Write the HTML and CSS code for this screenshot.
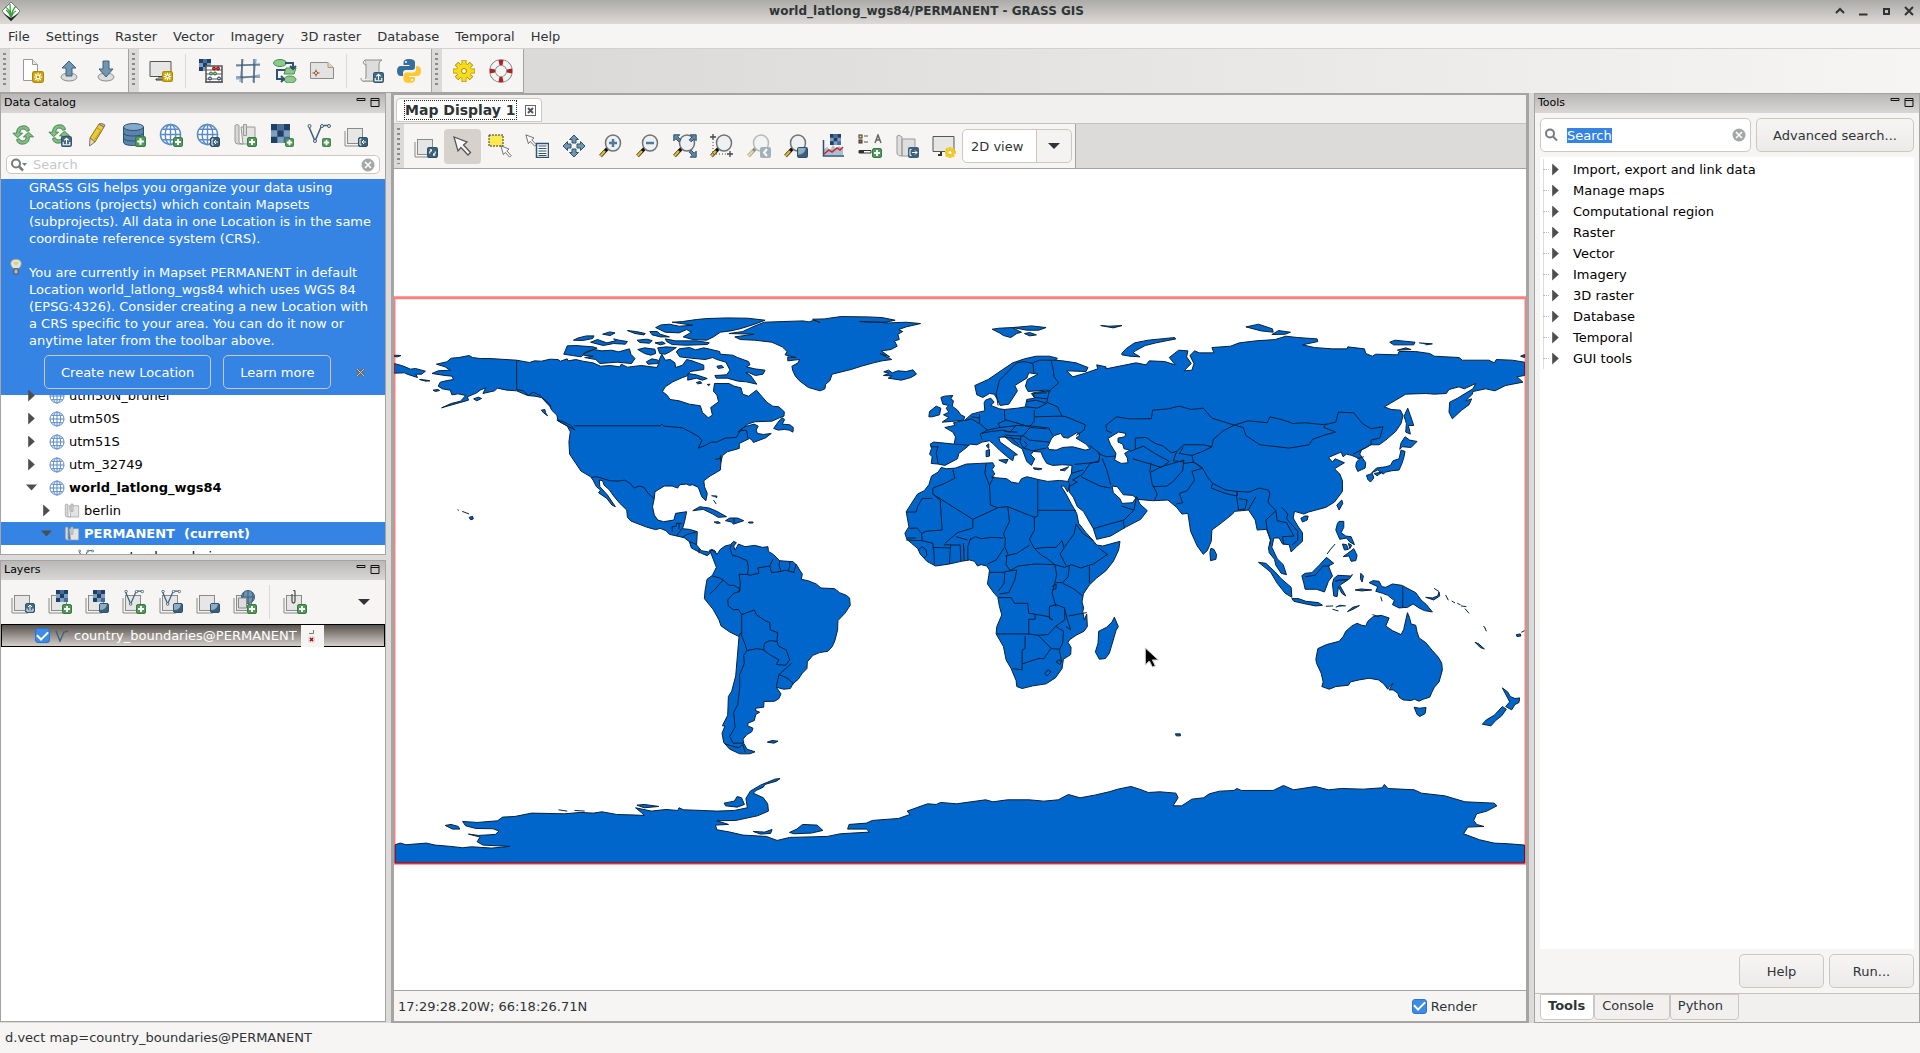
FILE: index.html
```html
<!DOCTYPE html>
<html lang="en">
<head>
    <meta charset="utf-8">
    <meta name="viewport" content="width=device-width, initial-scale=1">
    <title>world_latlong_wgs84/PERMANENT - GRASS GIS</title>
    <link rel="stylesheet" href="styles.css">
</head>
<body>
    <!-- icon set, 24x24 grid -->
    <svg class="sprite" aria-hidden="true">
        <symbol id="b-plus" viewBox="0 0 10 10"><rect x=".5" y=".5" width="9" height="9" rx="1.5" fill="#4e9a56" stroke="#3a7a45"/><path d="M5 2v6M2 5h6" stroke="#fff" stroke-width="2"/></symbol>
        <symbol id="b-up" viewBox="0 0 10 10"><rect x=".5" y=".5" width="9" height="9" rx="1.5" fill="#456a85" stroke="#33566f"/><path d="M5 7V2M3 4l2-2 2 2M2 5.500v2.500h6V5.500" fill="none" stroke="#fff"/></symbol>
        <symbol id="b-left" viewBox="0 0 10 10"><rect x=".5" y=".5" width="9" height="9" rx="1.500" fill="#3c5f7a" stroke="#2f5069"/><path d="M3.500 2H2v6h1.500M8 5H4M6 3L4 5l2 2" fill="none" stroke="#fff"/></symbol>
        <symbol id="b-moon" viewBox="0 0 10 10"><rect x=".5" y=".5" width="9" height="9" rx="1.500" fill="#3c5f7a" stroke="#2f5069"/><path d="M1 7Q7 7 8 1H1z" fill="#8fadc4"/></symbol>
        <symbol id="b-star" viewBox="0 0 10 10"><rect x=".5" y=".5" width="9" height="9" rx="1.500" fill="#d0a708" stroke="#b08b00"/><path d="M5 1.500v7M1.500 5h7M2.500 2.500l5 5M7.500 2.500l-5 5" stroke="#fff"/><circle cx="5" cy="5" r="1" fill="#c09a00"/></symbol>
        <symbol id="b-sync" viewBox="0 0 10 10"><rect x=".5" y=".5" width="9" height="9" rx="1.500" fill="#3c5f7a" stroke="#2f5069"/><path d="M2.500 6V4.500L4 3M7.500 4v1.500L6 7M2.500 2.500H4V4M7.500 7.500H6V6" fill="none" stroke="#fff"/></symbol>

        <symbol id="layers" viewBox="0 0 24 24"><path d="M1 6v15h16" fill="none" stroke="#888a88"/><rect x="3.500" y="3.500" width="15" height="15" fill="#e6e6e6" stroke="#8a8c8a"/></symbol>
        <symbol id="checker" viewBox="0 0 12 12"><path fill="#7f9fc1" d="M0 0h12v12H0z"/><path fill="#1f3f66" d="M0 0h4v4H0zM8 0h4v4H8zM4 4h4v4H4zM0 8h4v4H0z"/><path fill="#476c96" d="M4 0h4v4H4zM8 8h4v4H8z"/></symbol>
        <symbol id="vect" viewBox="0 0 24 24"><path d="M2 4l6 14L14 4l3-1.500h5" fill="none" stroke="#3c5f7a" stroke-width="1.500"/><g fill="#f6f5f4" stroke="#3c5f7a"><circle cx="2.500" cy="3" r="1.500"/><circle cx="8" cy="18" r="1.500"/><circle cx="15" cy="3" r="1.500"/><circle cx="22" cy="3" r="1.500"/></g></symbol>
        <symbol id="globe" viewBox="0 0 24 24"><g fill="#fff" stroke="#5b8bc9" stroke-width="1.500"><circle cx="12" cy="12" r="10.500"/><ellipse cx="12" cy="12" rx="5.500" ry="10.500"/><path d="M1.500 12h21M3.500 6.500h17M3.500 17.500h17M12 1.500v21"/></g></symbol>
        <symbol id="mapset" viewBox="0 0 24 24"><path d="M8 4h14v17H10z" fill="#e3e3e2" stroke="#989a98"/><path d="M2 2.500q2-2 4 0v17q2 2 4 1.500H5q-3 0-3-3zM10.500 1.500h3v11h-3z" fill="#d7d8d7" stroke="#989a98"/></symbol>
        <symbol id="refresh" viewBox="0 0 24 24"><g stroke="#3f7f49" fill="#7fbf84"><path d="M5 10q0-8 8-8 5 0 6 5l-3 1q-1-3-4-2.500-3 0-3.500 4.500h3l-5.500 5L1 10z"/><path d="M19 14q0 8-8 8-5 0-6-5l3-1q1 3 4 2.500 3 0 3.500-4.500h-3L18 9l5.500 5z"/></g></symbol>
        <symbol id="lens" viewBox="0 0 24 24"><path d="M9 14L1.500 22" stroke="#111" stroke-width="3.500"/><path d="M6 17l-4.500 5" stroke="#e8b92e" stroke-width="2.500"/><ellipse cx="14" cy="9" rx="7.500" ry="8" fill="#eef1f3" stroke="#6f7371" stroke-width="1.500"/></symbol>
        <symbol id="pointer" viewBox="0 0 24 24"><path d="M3 3l4 14 3-3.500 7 7.500 2.500-2.500-7-7.500L16 8z" fill="#fafafa" stroke="#555753" stroke-width="1.300"/></symbol>

        <symbol id="i-new" viewBox="0 0 24 24"><path d="M3.500.5h9l5 5v16h-14z" fill="#fff" stroke="#999"/><path d="M12.500.5v5h5" fill="#e5e5e5" stroke="#999"/><use href="#b-star" x="12" y="12" width="12" height="12"/></symbol>
        <symbol id="i-open" viewBox="0 0 24 24"><ellipse cx="12" cy="18" rx="8" ry="4" fill="#ddd" stroke="#8a8c8a"/><path d="M12 2l7 7h-4v8H9V9H5z" fill="#7295b0" stroke="#3f617b"/></symbol>
        <symbol id="i-save" viewBox="0 0 24 24"><ellipse cx="12" cy="18" rx="8" ry="4" fill="#ddd" stroke="#8a8c8a"/><path d="M9 2h6v8h4l-7 8-7-8h4z" fill="#7295b0" stroke="#3f617b"/></symbol>
        <symbol id="i-display" viewBox="0 0 24 24"><path d="M1 2.500h21v15H1z" fill="#e6e6e6" stroke="#555753"/><path d="M9 18h6v2H7v1h9" stroke="#333" fill="none"/><use href="#b-star" x="13" y="12" width="11" height="11"/></symbol>
        <symbol id="i-calc" viewBox="0 0 24 24"><use href="#checker" x="0" y="0" width="12" height="12"/><path d="M7 7h16v16H7z" fill="#fff" stroke="#555" stroke-width="1.500"/><path d="M7 11h16M7 15h16M7 20h16M6 23h18" stroke="#555"/><g fill="#e04040" stroke="#800"><circle cx="15" cy="9.500" r="1.500"/><circle cx="19" cy="9.500" r="1.500"/></g><g fill="#8c8" stroke="#363"><circle cx="12" cy="14.500" r="1.500"/><circle cx="16" cy="14.500" r="1.500"/></g><g fill="#acf" stroke="#235"><circle cx="11" cy="19.500" r="1.500"/><circle cx="20" cy="19.500" r="1.500"/></g></symbol>
        <symbol id="i-grid" viewBox="0 0 24 24"><path d="M7 0L4 23M20 0l-3 23M0 7l24-2M0 20l24-4" stroke="#7db3dc" stroke-width="1.500" fill="none"/><path d="M6 0v24M18 0v24M0 6h24M0 18h24" stroke="#46505a" stroke-width="1.200"/></symbol>
        <symbol id="i-model" viewBox="0 0 24 24"><g fill="#8dc98d" stroke="#4b8c50"><ellipse cx="7" cy="4" rx="6.500" ry="3.500"/><path d="M13 9h10l-2 6H11z"/><ellipse cx="17" cy="20.500" rx="6" ry="3.500"/></g><path d="M12 4h8v6M17 7l3 3 3-3M12 11H4v9h7M8 17l3 3-3 3" fill="none" stroke="#2f526d" stroke-width="2"/></symbol>
        <symbol id="i-carto" viewBox="0 0 24 24"><path d="M.5 3.500h17l6 5v11H.5z" fill="#e3e3e3" stroke="#8a8c8a"/><path d="M18 3.500v5h5.500" fill="#f0d4a0" stroke="#a98"/><path d="M6 10.500v7M2.500 14h7" stroke="#9c4a1a"/><circle cx="6" cy="14" r="1.500" fill="#fff" stroke="#9c4a1a"/></symbol>
        <symbol id="i-script" viewBox="0 0 24 24"><path d="M5 1h17q-3 1-3 4v17H3q3-1 3-4V6z" fill="#ddd" stroke="#8a8c8a"/><path d="M5 1q-4 3 1 5M1 19q0 4 4 3h13" fill="#eee" stroke="#8a8c8a"/><use href="#b-up" x="13" y="13" width="11" height="11"/></symbol>
        <symbol id="i-python" viewBox="0 0 24 24"><path d="M12 0Q6.500 0 6.500 3.500V6h6v1H4Q0 7 0 12t4 5h2v-3q0-3 3-3h6q3 0 3-3V3.500Q18 0 12 0z" fill="#366f9e"/><path d="M12 24q6 0 6-3.500V18h-6v-1h8q4 0 4-5t-4-5h-1v3q0 3.500-3 3.500H9.500q-3 0-3 3v4Q6.500 24 12 24z" fill="#ffc836"/><circle cx="9" cy="3" r="1" fill="#fff"/><circle cx="15" cy="21" r="1" fill="#fff"/></symbol>
        <symbol id="i-gear" viewBox="0 0 24 24"><g stroke="#b08b00" stroke-width="5"><path d="M12 1v22M1 12h22M4.500 4.500l15 15M19.500 4.500l-15 15"/></g><g stroke="#f7dc18" stroke-width="3.500"><path d="M12 1.500v21M1.500 12h21M5 5l14 14M19 5L5 19"/></g><circle cx="12" cy="12" r="7" fill="#f7dc18"/><circle cx="12" cy="12" r="2.500" fill="#f6f5f4" stroke="#b08b00"/></symbol>
        <symbol id="i-help" viewBox="0 0 24 24"><circle cx="12" cy="12" r="8.500" fill="none" stroke="#777" stroke-width="6.500"/><circle cx="12" cy="12" r="8.500" fill="none" stroke="#f3f3f3" stroke-width="5"/><g fill="#b52020"><path d="M9.500 1h5l-1 5h-3zM9.500 23h5l-1-5h-3zM1 9.500v5l5-1v-3zM23 9.500v5l-5-1v-3z"/></g></symbol>

        <symbol id="i-reload" viewBox="0 0 24 24"><use href="#refresh" width="22" height="22" x="1" y="1"/></symbol>
        <symbol id="i-reload2" viewBox="0 0 24 24"><use href="#refresh" width="22" height="22"/><use href="#b-up" x="13" y="13" width="11" height="11"/></symbol>
        <symbol id="i-edit" viewBox="0 0 24 24"><path d="M5 15L14 1l5 3L10 19z" fill="#ecc93a" stroke="#8b7410"/><path d="M5 15l5 4-5.500 4z" fill="#f1d9b5" stroke="#777"/><path d="M14 1l2-1 4 2-1 2z" fill="#caa" stroke="#777"/><path d="M12 5l4 2.500-7 10" fill="none" stroke="#b89a20"/></symbol>
        <symbol id="i-db" viewBox="0 0 24 24"><path d="M1.500 4v15q0 3.500 10 3.500t10-3.500V4" fill="#5b84ac" stroke="#2d5075"/><ellipse cx="11.500" cy="4" rx="10" ry="3.500" fill="#85a9cb" stroke="#2d5075"/><path d="M1.500 9.500q0 3.500 10 3.500t10-3.500M1.500 14.500q0 3.500 10 3.500t10-3.500" fill="none" stroke="#2d5075"/><use href="#b-plus" x="13" y="13" width="11" height="11"/></symbol>
        <symbol id="i-loc" viewBox="0 0 24 24"><use href="#globe" width="23" height="23"/><use href="#b-plus" x="14" y="14" width="10" height="10"/></symbol>
        <symbol id="i-locdl" viewBox="0 0 24 24"><use href="#globe" width="23" height="23"/><use href="#b-left" x="14" y="14" width="10" height="10"/></symbol>
        <symbol id="i-mapset" viewBox="0 0 24 24"><use href="#mapset" width="24" height="24"/><use href="#b-plus" x="14" y="14" width="10" height="10"/></symbol>
        <symbol id="i-rast" viewBox="0 0 24 24"><use href="#checker" width="19" height="19" x="1" y="1"/><use href="#b-plus" x="15" y="15" width="9" height="9"/></symbol>
        <symbol id="i-vect" viewBox="0 0 24 24"><use href="#vect" width="24" height="24"/><use href="#b-plus" x="15" y="15" width="9" height="9"/></symbol>
        <symbol id="i-link" viewBox="0 0 24 24"><use href="#layers" width="24" height="24" y="2"/><use href="#b-left" x="14" y="14" width="10" height="10"/></symbol>

        <symbol id="i-lopen" viewBox="0 0 24 24"><use href="#layers" width="24" height="24" y="2"/><use href="#b-up" x="14" y="13" width="10" height="10"/></symbol>
        <symbol id="i-lrast" viewBox="0 0 24 24"><use href="#layers" width="24" height="24" y="2"/><use href="#checker" x="8" y="0" width="12" height="12"/><use href="#b-plus" x="14" y="14" width="10" height="10"/></symbol>
        <symbol id="i-lrast2" viewBox="0 0 24 24"><use href="#layers" width="24" height="24" y="2"/><use href="#checker" x="8" y="0" width="12" height="12"/><use href="#b-moon" x="14" y="13" width="10" height="10"/></symbol>
        <symbol id="i-lvect" viewBox="0 0 24 24"><use href="#layers" width="24" height="24" y="2"/><use href="#vect" x="2" y="-1" width="20" height="20"/><use href="#b-plus" x="14" y="14" width="10" height="10"/></symbol>
        <symbol id="i-lvect2" viewBox="0 0 24 24"><use href="#layers" width="24" height="24" y="2"/><use href="#vect" x="2" y="-1" width="20" height="20"/><use href="#b-moon" x="14" y="13" width="10" height="10"/></symbol>
        <symbol id="i-lmoon" viewBox="0 0 24 24"><use href="#layers" width="24" height="24" y="2"/><use href="#b-moon" x="14" y="13" width="10" height="10"/></symbol>
        <symbol id="i-lweb" viewBox="0 0 24 24"><use href="#layers" width="24" height="24" y="2"/><circle cx="15" cy="7" r="6.500" fill="#6f93b3" stroke="#3c5f7a"/><path d="M8.500 7h13M15 .5v13M11 2q-2 5 0 10M19 2q2 5 0 10" stroke="#3c5f7a" fill="none"/><path d="M5.500 8h8v10h-8z" fill="#ddd" stroke="#888"/><use href="#b-plus" x="14" y="14" width="10" height="10"/></symbol>
        <symbol id="i-lgroup" viewBox="0 0 24 24"><use href="#layers" width="24" height="24" y="2"/><path d="M9 4v7q0 2 1.500 2t1.500-2V2q0-2-2-2" fill="none" stroke="#555" stroke-width="1.300"/><use href="#b-plus" x="14" y="14" width="10" height="10"/></symbol>

        <symbol id="i-render" viewBox="0 0 24 24"><use href="#layers" width="24" height="24" y="2"/><use href="#b-sync" x="13" y="13" width="11" height="11"/></symbol>
        <symbol id="i-select" viewBox="0 0 24 24"><path d="M1 1h14v11H1z" fill="#fce94f" stroke="#333" stroke-dasharray="2 1"/><use href="#pointer" x="11" y="10" width="15" height="15"/></symbol>
        <symbol id="i-query" viewBox="0 0 24 24"><use href="#pointer" x="-1" y="-1" width="15" height="15"/><path d="M11.500 9.500h12v14h-12z" fill="#fff" stroke="#2f526d" stroke-width="1.500"/><path d="M13.500 12h8M13.500 14.500h8M13.500 17h8M13.500 19.500h8M13.500 21.500h8" stroke="#2f526d"/></symbol>
        <symbol id="i-pan" viewBox="0 0 24 24"><g fill="#7295b0" stroke="#2f526d"><path d="M12 1l4.500 4.500H14V9h-4V5.500H7.500zM12 23l4.500-4.500H14V15h-4v3.500H7.500zM1 12l4.500-4.500V10H9v4H5.500v2.500zM23 12l-4.500-4.500V10H15v4h3.500v2.500z"/></g></symbol>
        <symbol id="i-zin" viewBox="0 0 24 24"><use href="#lens" width="24" height="24"/><path d="M14 5v8M10 9h8" stroke="#4f7a9c" stroke-width="2.500"/></symbol>
        <symbol id="i-zout" viewBox="0 0 24 24"><use href="#lens" width="24" height="24"/><path d="M10 9h8" stroke="#4f7a9c" stroke-width="2.500"/></symbol>
        <symbol id="i-zext" viewBox="0 0 24 24"><use href="#lens" width="24" height="24"/><g fill="#5f87a5" stroke="#2f526d"><path d="M.8.8h6l-2 2 3 3-2 2-3-3-2 2zM23.200.8h-6l2 2-3 3 2 2 3-3 2 2zM23.200 23.200h-6l2-2-3-3 2-2 3 3 2-2z"/></g></symbol>
        <symbol id="i-zreg" viewBox="0 0 24 24"><use href="#lens" width="24" height="24"/><path d="M3 0v6M0 3h6M20 17v6M17 20h6" stroke="#444" stroke-width="1.300"/><path d="M3 8v12h13" stroke="#444" fill="none" stroke-dasharray="1 2"/></symbol>
        <symbol id="i-zback" viewBox="0 0 24 24"><g opacity=".45"><use href="#lens" width="24" height="24"/><rect x="13" y="13" width="11" height="11" rx="2" fill="#3c5f7a"/><path d="M20 15l-3 3.500 3 3.500" stroke="#fff" stroke-width="2" fill="none"/></g></symbol>
        <symbol id="i-zmore" viewBox="0 0 24 24"><use href="#lens" width="24" height="24"/><use href="#b-moon" x="13" y="13" width="11" height="11"/></symbol>
        <symbol id="i-analyze" viewBox="0 0 24 24"><use href="#checker" x="9" y="0" width="11" height="11"/><path d="M3 21v-6l3-2 3 3 3-5 3 4 3-3 4 3v6z" fill="#a9c0d4"/><path d="M2.500 6v16H23" fill="none" stroke="#2f526d" stroke-width="1.500"/><path d="M3 20l5-4 3 2 5-4 3 2 3-3" fill="none" stroke="#c22" stroke-width="1.500"/></symbol>
        <symbol id="i-overlay" viewBox="0 0 24 24"><rect x="1" y="1" width="3" height="3" fill="#fe3" stroke="#333"/><rect x="1" y="6" width="3" height="3" fill="#d55" stroke="#333"/><path d="M6 2h4M6 8h4" stroke="#555"/><path d="M17 9l3-8 3 8M18 6h4" fill="none" stroke="#666" stroke-width="1.500"/><path d="M1 16.500h12v2.500H1z" fill="#fff" stroke="#333"/><path d="M1 16h5v3H1z" fill="#333"/><use href="#b-plus" x="14" y="14" width="10" height="10"/></symbol>
        <symbol id="i-export" viewBox="0 0 24 24"><path d="M7 5h13v17H7zM2 2q2-2 5 1v19q-5 0-5-3z" fill="#dedede" stroke="#999b99"/><rect x="13" y="13" width="11" height="11" rx="2" fill="#3c5f7a"/><path d="M16.500 15.500H15v6h1.500M17 18.500h5M20 16.500l2 2-2 2" stroke="#fff" fill="none"/></symbol>
        <symbol id="i-settings" viewBox="0 0 24 24"><path d="M1 2.500h21v15H1z" fill="#e6e6e6" stroke="#555753"/><path d="M9 18v3H6" stroke="#333" fill="none" stroke-width="2"/><path d="M18 13v11M13 18.500h11M14 14.500l8 8M22 14.500l-8 8" stroke="#f0c929" stroke-width="3"/><circle cx="18" cy="18.500" r="1.500" fill="#fff"/></symbol>
        <symbol id="i-clear" viewBox="0 0 14 14"><circle cx="7" cy="7" r="6.500" fill="#a3a7a8"/><path d="M4 4l6 6M10 4l-6 6" stroke="#fff" stroke-width="1.500"/></symbol>
        <symbol id="i-min" viewBox="0 0 10 10"><path d="M1 1.500h8v2H1z" fill="none" stroke="#111"/></symbol>
        <symbol id="i-max" viewBox="0 0 10 10"><path d="M1 1.500h8v8H1zM1 3.500h8" fill="none" stroke="#111"/></symbol>
    </svg>

    <div class="window">
        <header class="titlebar">
            <svg class="logo" viewBox="0 0 20 22"><path d="M10 1l9 9-9 10L1 10z" fill="#fff" stroke="#777"/><path d="M2 12l8 8 8-8-8 5z" fill="#222"/><path d="M10 17Q9 8 4 6M10 17Q9 9 9 3M10 17q1-8 5-12M10 17Q8 11 5 9M10 17q2-6 5-7" fill="none" stroke="#35a03a" stroke-width="1.300"/></svg>
            <h1>world_latlong_wgs84/PERMANENT - GRASS GIS</h1>
            <div class="win-buttons">
                <button aria-label="Shade"><svg viewBox="0 0 10 10"><path d="M1 7l4-4 4 4" fill="none" stroke="#2e3436" stroke-width="2"/></svg></button>
                <button aria-label="Minimize"><svg viewBox="0 0 10 10"><path d="M1 8.500h8.500" stroke="#2e3436" stroke-width="2"/></svg></button>
                <button aria-label="Maximize"><svg viewBox="0 0 10 10"><path d="M3 3h5v5H3z" fill="none" stroke="#2e3436" stroke-width="2"/></svg></button>
                <button aria-label="Close"><svg viewBox="0 0 10 10"><path d="M1 1l8 8M9 1L1 9" stroke="#2e3436" stroke-width="2"/></svg></button>
            </div>
        </header>

        <nav class="menubar">
            <a href="#">File</a>
            <a href="#">Settings</a>
            <a href="#">Raster</a>
            <a href="#">Vector</a>
            <a href="#">Imagery</a>
            <a href="#">3D raster</a>
            <a href="#">Database</a>
            <a href="#">Temporal</a>
            <a href="#">Help</a>
        </nav>

        <div class="toolbars">
            <div class="toolbar">
                <span class="grip"></span>
                <button class="tool" aria-label="New workspace"><svg><use href="#i-new"/></svg></button>
                <button class="tool" aria-label="Open workspace"><svg><use href="#i-open"/></svg></button>
                <button class="tool" aria-label="Save workspace"><svg><use href="#i-save"/></svg></button>
            </div>
            <div class="toolbar">
                <span class="grip"></span>
                <button class="tool" aria-label="New map display"><svg><use href="#i-display"/></svg></button>
                <span class="sep"></span>
                <button class="tool" aria-label="Raster map calculator"><svg><use href="#i-calc"/></svg></button>
                <button class="tool" aria-label="Georectifier"><svg><use href="#i-grid"/></svg></button>
                <button class="tool" aria-label="Graphical modeler"><svg><use href="#i-model"/></svg></button>
                <button class="tool" aria-label="Cartographic composer"><svg><use href="#i-carto"/></svg></button>
                <span class="sep"></span>
                <button class="tool" aria-label="Launch script"><svg><use href="#i-script"/></svg></button>
                <button class="tool" aria-label="Python editor"><svg><use href="#i-python"/></svg></button>
            </div>
            <div class="toolbar">
                <span class="grip"></span>
                <button class="tool" aria-label="GUI settings"><svg><use href="#i-gear"/></svg></button>
                <button class="tool" aria-label="Help"><svg><use href="#i-help"/></svg></button>
            </div>
        </div>

        <main class="panes">
            <div class="side left">
                <section class="pane catalog">
                    <h2 class="caption">Data Catalog <span><svg><use href="#i-min"/></svg><svg><use href="#i-max"/></svg></span></h2>
                    <div class="tools">
                        <button class="tool" aria-label="Reload tree"><svg><use href="#i-reload"/></svg></button>
                        <button class="tool" aria-label="Reload current mapset"><svg><use href="#i-reload2"/></svg></button>
                        <button class="tool" aria-label="Allow edits"><svg><use href="#i-edit"/></svg></button>
                        <button class="tool" aria-label="Add database"><svg><use href="#i-db"/></svg></button>
                        <button class="tool" aria-label="Create location"><svg><use href="#i-loc"/></svg></button>
                        <button class="tool" aria-label="Download location"><svg><use href="#i-locdl"/></svg></button>
                        <button class="tool" aria-label="Create mapset"><svg><use href="#i-mapset"/></svg></button>
                        <button class="tool" aria-label="Import raster"><svg><use href="#i-rast"/></svg></button>
                        <button class="tool" aria-label="Import vector"><svg><use href="#i-vect"/></svg></button>
                        <button class="tool" aria-label="More imports"><svg><use href="#i-link"/></svg></button>
                    </div>
                    <div class="field small">
                        <svg class="loupe" viewBox="0 0 18 14"><circle cx="6" cy="5.500" r="4" fill="none" stroke="#777b7c" stroke-width="2"/><path d="M9 8.500l4 4" stroke="#777b7c" stroke-width="2.500"/><path d="M12 5h5l-2.500 3z" fill="#777b7c"/></svg>
                        <input type="text" placeholder="Search" aria-label="Search catalog">
                        <button aria-label="Clear"><svg><use href="#i-clear"/></svg></button>
                    </div>
                    <div class="infobar">
                        <svg class="bulb" viewBox="0 0 14 18"><path d="M7 1q5 0 5.500 4.500 0 3-2.500 5H4q-2.500-2-2.500-5Q2 1 7 1z" fill="#d8e4e8" stroke="#888"/><path d="M4 4h6L8 7H6z" fill="#e8d44a"/><path d="M5 11h4v5H5z" fill="#bbb" stroke="#555"/></svg>
                        <div class="message">
                            <p>GRASS GIS helps you organize your data using Locations (projects) which contain Mapsets (subprojects). All data in one Location is in the same coordinate reference system (CRS).</p>
                            <p>You are currently in Mapset PERMANENT in default Location world_latlong_wgs84 which uses WGS 84 (EPSG:4326). Consider creating a new Location with a CRS specific to your area. You can do it now or anytime later from the toolbar above.</p>
                            <div class="info-buttons">
                                <button>Create new Location</button>
                                <button>Learn more</button>
                                <button class="dismiss" aria-label="Close"><svg viewBox="0 0 10 10"><path d="M1 1l8 8M9 1L1 9" stroke="#666" stroke-width="3"/><path d="M1 1l8 8M9 1L1 9" stroke="#d8d4ce"/></svg></button>
                            </div>
                        </div>
                    </div>
                    <ul class="tree">
                        <li><i class="tri"></i><svg><use href="#globe"/></svg>utm50N_brunei</li>
                        <li><i class="tri"></i><svg><use href="#globe"/></svg>utm50S</li>
                        <li><i class="tri"></i><svg><use href="#globe"/></svg>utm51S</li>
                        <li><i class="tri"></i><svg><use href="#globe"/></svg>utm_32749</li>
                        <li class="bold"><i class="tri open"></i><svg><use href="#globe"/></svg>world_latlong_wgs84</li>
                        <li class="l2"><i class="tri"></i><svg><use href="#mapset"/></svg>berlin</li>
                        <li class="l2 bold current"><i class="tri open"></i><svg><use href="#mapset"/></svg>PERMANENT&nbsp; (current)</li>
                        <li class="l3"><svg><use href="#vect"/></svg>country_boundaries</li>
                    </ul>
                </section>

                <section class="pane">
                    <h2 class="caption">Layers <span><svg><use href="#i-min"/></svg><svg><use href="#i-max"/></svg></span></h2>
                    <div class="tools">
                        <button class="tool" aria-label="Add multiple layers"><svg><use href="#i-lopen"/></svg></button>
                        <button class="tool" aria-label="Add raster"><svg><use href="#i-lrast"/></svg></button>
                        <button class="tool" aria-label="Add various raster layers"><svg><use href="#i-lrast2"/></svg></button>
                        <button class="tool" aria-label="Add vector"><svg><use href="#i-lvect"/></svg></button>
                        <button class="tool" aria-label="Add various vector layers"><svg><use href="#i-lvect2"/></svg></button>
                        <button class="tool" aria-label="Add overlays"><svg><use href="#i-lmoon"/></svg></button>
                        <button class="tool" aria-label="Add web service layer"><svg><use href="#i-lweb"/></svg></button>
                        <span class="sep"></span>
                        <button class="tool" aria-label="Add group"><svg><use href="#i-lgroup"/></svg></button>
                        <button class="tool more" aria-label="More"><i class="down"></i></button>
                    </div>
                    <div class="layer-list">
                        <div class="layer">
                            <input type="checkbox" id="layer1" class="check" checked>
                            <label for="layer1"><svg viewBox="0 0 16 14"><path d="M2 2l4 10L10 3l4-1" fill="none" stroke="#3c5f7a" stroke-width="1.300"/></svg>country_boundaries@PERMANENT</label>
                            <button aria-label="Layer options"><svg viewBox="0 0 10 14"><path d="M6.500 1v3.500H2" fill="none" stroke="#777"/><rect x="2" y="8" width="5" height="5" fill="#fff" stroke="#ccc"/><path d="M3 9l3 3M6 9l-3 3" stroke="#b00" stroke-width="1.500"/></svg></button>
                        </div>
                    </div>
                </section>
            </div>

            <section class="display">
                <div class="tabs">
                    <div class="tab"><a href="#">Map Display 1</a><button aria-label="Close tab"><svg viewBox="0 0 11 11"><rect x=".5" y=".5" width="10" height="10" fill="#fff" stroke="#666"/><path d="M3 3l5 5M8 3l-5 5" stroke="#555" stroke-width="2"/></svg></button></div>
                </div>
                <div class="map-tools">
                    <div class="toolbar">
                        <span class="grip"></span>
                        <button class="tool" aria-label="Render map"><svg><use href="#i-render"/></svg></button>
                        <button class="tool active" aria-label="Pointer"><svg><use href="#pointer"/></svg></button>
                        <button class="tool" aria-label="Select features"><svg><use href="#i-select"/></svg></button>
                        <button class="tool" aria-label="Query"><svg><use href="#i-query"/></svg></button>
                        <button class="tool" aria-label="Pan"><svg><use href="#i-pan"/></svg></button>
                        <button class="tool" aria-label="Zoom in"><svg><use href="#i-zin"/></svg></button>
                        <button class="tool" aria-label="Zoom out"><svg><use href="#i-zout"/></svg></button>
                        <button class="tool" aria-label="Zoom to layer"><svg><use href="#i-zext"/></svg></button>
                        <button class="tool" aria-label="Zoom to region"><svg><use href="#i-zreg"/></svg></button>
                        <button class="tool" aria-label="Zoom back" disabled><svg><use href="#i-zback"/></svg></button>
                        <button class="tool" aria-label="Zoom options"><svg><use href="#i-zmore"/></svg></button>
                        <button class="tool" aria-label="Analyze map"><svg><use href="#i-analyze"/></svg></button>
                        <button class="tool" aria-label="Add map elements"><svg><use href="#i-overlay"/></svg></button>
                        <button class="tool" aria-label="Save display"><svg><use href="#i-export"/></svg></button>
                        <button class="tool" aria-label="Display settings"><svg><use href="#i-settings"/></svg></button>
                        <div class="combo">
                            <select aria-label="View mode"><option>2D view</option><option>3D view</option></select>
                            <i class="down"></i>
                        </div>
                    </div>
                </div>
                <div class="canvas">
                    <svg class="world" viewBox="394 169 1133 821">
                        <!-- North America -->
                        <g class="land" transform="translate(390 290) scale(.3444 .3333)">
                            <path d="M150 353L178 340 205 333 220 316 198 311 180 314 175 300 152 296 140 288 146 276 162 272 185 268 180 258 160 256 122 250 140 242 175 240 160 230 135 222 165 215 178 204 200 202 230 196 240 202 262 205 290 205 368 210 405 217 420 212 440 213 465 207 488 208 495 213 515 206 518 212 540 208 560 213 590 218 612 228 640 226 668 230 672 222 690 231 730 226 776 232 780 222 784 205 790 192 800 210 815 208 828 218 830 232 850 225 862 208 878 212 912 225 912 238 872 244 862 258 850 262 822 275 800 290 792 304 806 316 814 328 840 332 870 342 902 347 908 367 925 383 937 375 932 352 955 335 950 315 940 303 943 280 985 280 1000 288 1020 293 1025 312 1042 318 1065 300 1080 318 1095 336 1112 348 1130 350 1146 365 1145 378 1132 383 1110 393 1060 395 1040 402 1012 425 1030 410 1058 402 1070 408 1064 420 1068 430 1085 433 1108 430 1092 443 1056 457 1052 450 1045 445 1015 460 1015 475 980 485 966 497 962 515 960 540 930 558 912 572 914 590 922 610 918 632 906 620 896 592 880 584 870 586 862 582 842 584 836 594 820 588 797 588 770 605 768 625 763 650 768 675 778 690 795 695 825 690 830 670 862 665 856 695 850 716 870 718 893 725 891 765 905 782 925 786 935 778 945 783 950 797 942 795 932 788 922 797 905 790 876 774 870 755 855 743 812 733 802 722 785 715 772 719 745 711 700 693 690 682 688 660 668 640 650 618 638 600 622 585 618 572 608 570 610 590 632 615 655 650 645 645 630 625 606 608 612 600 600 590 590 570 583 560 555 543 540 520 522 492 520 455 524 425 515 408 488 392 485 375 470 360 464 348 440 322 420 318 400 316 368 302 340 300 312 294 304 302 270 310 278 293 262 300 252 308 225 320 228 330z"/>
                            <path d="M485 390L502 394 526 406 538 420 520 410zM440 360L450 358 452 368 458 377 446 368zM243 326L257 321 266 325 252 332zM125 300L139 298 144 301 132 304zM86 268L98 269 116 272 104 273zM12 220L34 226 60 237 74 235 103 243 92 252 75 252 80 262 50 252 42 248 12 249zM12 195L32 196 22 200 12 199z"/>
                            <path d="M1115 415L1127 397 1139 383 1147 388 1140 402 1162 404 1172 412 1171 426 1160 420 1146 418 1128 420z"/>
                            <path d="M832 185L840 176 870 172 888 179 912 173 930 177 958 184 960 192 996 195 1010 202 1042 214 1046 224 1036 230 1060 236 1090 240 1084 252 1062 256 1044 248 1034 248 1048 256 1066 282 1036 275 1012 273 980 264 948 264 944 256 978 254 988 240 976 216 950 208 938 202 916 208 876 204 842 200zM865 270L866 250 890 254 922 265 908 270 890 264zM890 277L902 274 906 279 894 281zM922 283L930 282 926 287zM950 228L964 226 970 232 954 235z"/>
                            <path d="M515 167L540 166 590 170 602 174 568 186 556 200 530 196 505 192 510 180zM562 191L592 178 616 182 644 180 664 185 696 176 700 192 712 205 702 220 660 216 610 220 598 208 566 202 590 198 562 195zM720 178L740 173 770 177 772 190 758 195 740 190zM778 173L802 170 832 172 815 184 800 192 784 190zM745 215L761 206 780 210 778 220 750 222z"/>
                            <path d="M772 112L788 104 812 102 840 108 880 105 820 96 850 94 890 88 920 85 980 83 1040 84 1090 90 1070 98 1042 108 1016 116 990 122 960 126 940 140 920 150 880 148 852 140 876 126 862 118 840 128 800 126zM533 150L547 143 571 137 593 137 589 145 560 151zM583 156L603 148 630 158 655 152 650 146 666 150 690 154 684 162 650 160 620 166zM618 132L638 125 654 128 640 136zM690 121L716 124 742 130 738 134 712 130zM718 150L746 147 762 151 754 159 726 157zM755 124L777 124 785 132 812 140 786 140 762 134zM770 158L792 155 800 160 786 164zM800 146L830 152 892 152 928 158 922 163 860 165 820 163 804 154z"/>
                            <path d="M985 130L1025 124 1058 108 1088 96 1140 94 1200 92 1218 95 1232 90 1250 97 1228 87 1262 86 1310 79 1390 80 1430 82 1468 90 1440 96 1365 94 1450 98 1500 96 1542 100 1500 110 1478 118 1490 124 1476 132 1480 148 1466 152 1474 168 1456 178 1428 182 1452 200 1424 190 1458 208 1430 212 1405 218 1370 228 1340 238 1285 252 1278 272 1266 282 1264 296 1250 302 1216 292 1190 272 1178 258 1170 240 1168 228 1186 218 1190 208 1156 212 1156 200 1180 202 1148 194 1154 184 1140 170 1110 156 1060 150 1018 148 1002 140 1058 132z"/>
                            <path d="M1435 245L1449 240 1460 248 1476 242 1500 244 1520 239 1530 252 1514 262 1486 270 1448 264 1458 257 1434 256 1450 250z"/>
                            <path d="M880 662L900 650 928 654 950 664 978 680 954 682 938 672 910 658zM975 692L987 684 1010 684 1028 692 1014 697 998 702 992 696zM942 696L954 695 960 699 950 700zM1042 696L1055 696 1055 699 1043 699zM934 617L950 618 949 624M940 630L948 642M196 659L200 661M210 664L230 672M230 682L240 679 242 687 234 689z"/>
                            <path class="line" d="M368 210V298L388 302 402 316 416 306 436 316 464 342 468 350M535 407H785L790 402 796 408 850 413 870 424 898 440 906 452 896 474 916 466 934 456 950 456 974 444 1006 442 1018 422 1036 420 1040 443M585 562L600 560 640 572 666 573 682 570 698 580 710 594 724 588 738 592 752 612 768 626M820 726L820 710 832 708V700L848 700M840 700V718M848 716L832 738M850 742L862 734 890 726M870 755L890 763M898 776V790M945 508L963 504 961 518M960 495V511M1000 684V700"/>
                        </g>
                        <!-- South America -->
                        <g class="land" transform="translate(660 520) scale(.3333)">
                            <path d="M150 90L160 92 172 103 182 88 196 78 212 74 222 64 230 68 222 78 226 90 232 80 236 72 256 80 285 76 308 82 325 80 326 94 342 104 360 122 385 124 400 125 412 136 420 150 428 162 425 178 445 182 470 192 484 204 525 206 540 218 560 226 570 234 572 256 556 280 535 302 534 330 526 362 518 380 505 394 480 398 460 406 443 426 442 446 428 460 416 478 400 492 392 506 372 508 350 502 364 522 358 536 345 544 313 545 312 562 288 565 288 572 300 577 288 584 284 602 265 610 264 618 280 625 276 636 262 644 250 658 252 670 262 688 286 696 270 702 240 702 210 688 192 668 187 640 196 618 188 618 204 586 206 530 216 514 228 468 238 350 210 336 184 318 178 300 160 268 134 236 136 212 142 178 158 166 170 142z"/>
                            <path d="M323 667L337 662 355 664 343 670z"/>
                            <path class="line" d="M215 74L211 86 218 106 236 110 262 122 266 142 264 164 272 166 278 164 298 160 294 144 330 138 340 118M330 138L336 158 366 154 376 150 404 158M360 122L358 136 364 154M390 126L390 140 386 152M410 132L402 158M262 163H238L242 190 240 214 222 220 204 240 206 258 222 270 236 268 246 284 284 270 290 284 316 302 330 308 332 330 354 338 352 362 356 378 380 390 390 420 378 436 350 434 358 420 330 404 312 390 314 370 330 362 352 364M150 222L164 210 190 180 180 174 158 168M190 180L208 196 222 196 240 206 236 218M246 284L246 348 256 372 262 392 292 386 314 390M262 392L252 406 254 430 240 464 240 504 234 554 222 578 226 622 210 650 220 670 250 670M396 430L358 464 350 500M358 464L382 474 402 492M195 672L236 684 250 674 256 698M238 348L246 336"/>
                        </g>
                        <!-- Africa, Europe, Asia and the islands -->
                        <g class="land" transform="translate(890 310) scale(.3333)">
                            <path d="M155 472L170 476 198 474 230 462 270 460 310 458 315 468 308 478 316 492 306 502 330 504 352 506 366 516 388 520 396 506 412 500 430 504 445 508 475 514 510 511 535 514 542 522 535 546 524 528 515 528 530 552 545 580 562 610 568 640 590 668 610 690 622 705 640 708 692 694 688 720 672 754 650 782 622 804 600 825 582 852 578 876 583 895 580 905 585 930 592 912 594 950 584 964 560 976 540 990 536 998 545 1012 544 1034 522 1048 518 1076 498 1104 470 1122 430 1128 398 1136 382 1130 380 1112 365 1076 350 1050 342 1010 320 972 322 950 337 915 330 890 325 862 314 850 294 822 298 796 300 780 292 768 275 764 264 768 255 754 240 750 215 754 180 762 160 765 138 768 112 754 92 732 85 716 66 700 52 688 46 670 58 650 50 605 62 586 84 552 104 542 118 524 126 498 146 486z"/>
                            <path d="M125 460L128 440 120 432 126 415 122 402 132 396 165 399 194 402 198 380 190 366 166 352 196 346 192 338 226 330 246 312 268 306 286 302 284 278 288 270 304 264 314 276 304 286 330 296 345 298 385 294 408 290 412 268 436 264 426 250 440 246 482 242 470 240 416 244 408 228 414 208 446 192 418 188 412 204 376 226 384 242 366 270 358 282 332 286 324 268 314 252 300 250 280 262 262 254 256 226 296 208 340 178 370 158 405 146 440 138 480 138 504 144 498 150 520 152 560 158 596 172 590 184 532 182 550 200 578 192 602 184 625 176 622 164 650 170 650 176 680 170 740 158 770 164 780 152 826 154 858 164 840 142 868 120 896 122 892 140 906 160 884 182 908 180 914 160 902 136 916 122 930 128 974 128 968 112 1024 108 1050 98 1100 92 1158 88 1190 78 1226 82 1284 86 1286 94 1240 104 1276 112 1330 116 1374 116 1376 110 1426 116 1430 130 1450 138 1460 132 1526 134 1530 124 1580 124 1622 130 1636 138 1710 142 1720 150 1800 150 1816 158 1822 148 1870 150 1907 156V196L1884 200 1902 216 1850 226 1818 242 1790 236 1752 244 1750 252 1730 272 1748 266 1740 284 1718 300 1690 326 1680 306 1682 276 1706 264 1722 254 1752 236 1760 220 1726 236 1710 230 1680 238 1672 250 1636 252 1610 250 1550 252 1520 270 1486 290 1506 298 1534 300 1542 316 1536 340 1520 364 1490 390 1470 404 1444 404 1432 412 1418 418 1412 432 1430 458 1428 474 1406 484 1400 470 1402 456 1412 446 1388 436 1372 432 1362 440 1356 426 1318 442 1330 456 1338 446 1366 458 1336 476 1352 492 1360 512 1360 544 1336 576 1310 592 1258 606 1244 612 1216 604 1212 624 1226 648 1240 668 1240 694 1222 710 1206 726 1200 704 1180 702 1170 684 1154 684 1148 712 1164 746 1182 764 1192 794 1176 790 1160 766 1156 748 1140 728 1138 714 1144 690 1132 658 1104 660 1098 630 1078 600 1036 604 1030 612 1000 636 968 660 966 694 954 722 942 733 924 708 904 664 896 610 878 612 862 592 836 570 790 572 746 568 730 556 702 554 684 530 668 528 672 548 692 566 698 580 730 578 742 560 752 582 774 602 754 628 708 652 664 678 622 688 612 656 582 604 564 590 552 562 540 546 540 520 536 512 546 490 548 466 520 464 490 466 472 460 460 440 455 426 432 424 424 434 436 446 426 466 412 454 398 416 370 400 346 380 328 382 332 396 352 410 384 434 374 436 370 452 356 442 330 420 312 402 300 392 278 396 262 404 240 402 234 410 208 430 204 446 166 466 146 462z"/>
                            <path d="M118 320L120 304 140 288 154 294 150 314 128 320zM165 258L190 256 184 266 192 272 188 288 204 300 214 314 226 320 222 330 186 334 158 336 178 322 162 314 178 306 170 294 178 286 160 282 154 262zM290 407L298 401 298 415zM290 422L300 418 300 438 290 440zM328 450L356 448 350 460zM432 473L458 476 450 479 434 477zM512 480L538 470 526 482z"/>
                            <path d="M308 57L328 54 368 52 396 66 382 70 364 82 342 76 330 68zM370 52L426 47 470 52 448 60 412 60zM405 70L421 67 441 74 421 77zM634 46L660 48 698 46 672 53zM697 130L712 114 736 98 776 90 856 82 860 86 800 98 768 106 738 122 732 128 752 140 722 138 698 134zM1070 50L1108 42 1150 56 1152 66 1116 62zM1148 73L1168 61 1204 66 1188 72zM1502 96L1518 90 1578 96 1574 104 1514 104zM1590 98L1630 101 1610 104M1525 120L1550 113 1566 118zM1895 138L1907 133V142z"/>
                            <path d="M1545 318L1556 294 1564 316 1574 346 1558 346 1564 372 1550 366 1552 340zM1548 380L1562 390 1584 394 1566 412 1540 410 1532 418 1536 398zM1536 420L1548 424 1544 444 1538 462 1530 480 1508 482 1490 486 1482 492 1466 480 1448 488 1462 474 1490 470 1504 466 1512 452 1530 446zM1432 496L1450 490 1454 504 1444 516 1436 508zM1455 490L1480 486 1464 497zM1343 585L1358 570 1361 580 1350 600zM1235 625L1247 618 1257 618 1254 630 1240 636zM965 715L974 718 982 734 980 748 964 752 962 728zM1345 640L1350 634 1364 634 1364 652 1356 668 1370 678 1386 680 1396 704 1382 696 1372 684 1352 688 1340 660zM1362 740L1376 730 1394 716 1404 736 1400 752 1386 754 1380 738zM1360 702L1372 704 1378 718 1366 720zM1378 700L1388 706 1382 716zM1314 732L1324 718 1338 702"/>
                            <path d="M1108 757L1130 760 1158 786 1176 806 1206 832 1208 862 1188 850 1164 820 1144 786zM1208 866L1228 866 1250 874 1288 878 1300 886 1280 888 1240 880 1214 874zM1310 889L1332 888M1340 892L1352 886 1370 888M1330 898L1348 903M1375 905L1391 892 1411 887 1392 898zM1238 797L1248 790 1268 788 1290 766 1312 742 1334 760 1318 768 1330 798 1318 814 1306 846 1282 838 1248 838 1244 820zM1330 822L1334 806 1346 796 1384 798 1390 794 1380 808 1354 810 1338 814 1352 810 1376 810 1352 826 1370 858 1358 850 1348 830 1344 860 1334 858zM1415 790L1423 798 1419 816 1414 806zM1398 840L1416 837 1448 840 1418 843zM1440 818L1452 812 1470 814 1478 830 1490 832 1510 822 1538 826 1580 848 1596 870 1612 884 1630 906 1606 902 1590 894 1572 882 1556 892 1530 894 1510 884 1516 872 1496 856 1480 850 1460 844 1466 830zM1610 862L1630 864 1646 858 1650 846 1652 858 1634 870zM1635 835L1650 845M1670 855L1678 871M1688 873L1698 879M1705 880L1715 885M1716 888L1732 890M1728 896L1740 910M1475 860L1479 874"/>
                            <path d="M675 922L687 950 680 962 660 1030 648 1046 630 1048 618 1026 626 1000 628 964 652 952 668 936z"/>
                            <path class="sea" d="M475 410L486 386 496 376 514 370 522 382 536 384 562 368 572 374 560 384 590 402 602 416 588 420 550 410 520 412 500 420 478 418zM656 385L674 374 688 366 710 370 706 380 686 384 686 396 700 402 704 416 722 420 706 430 714 444 716 458 696 460 676 450 680 430 664 404z"/>
                            <path class="line" d="M445 508V618L435 622 355 590M447 601H560M435 620V660L420 688 434 714 456 736 474 746 496 764 526 772 546 764 574 774 612 762 656 732M355 590L360 634 342 672 348 686 346 710 356 734M250 628L328 592 355 590M130 552L250 628V654L204 668 166 700M130 552V534L170 518 196 504 190 478M128 565H98L84 590 80 606H50M152 572L158 660 108 664 98 670M130 552L156 574M303 585L300 526 286 490 290 460M303 585L322 592M300 526L314 498M240 690L258 680 276 686 306 682 342 684M348 738L382 730 420 706M434 716L472 712 500 712 518 692 524 714 512 732 530 766M526 710L554 672 560 642 580 670 612 692M656 735L628 714M352 736L350 764 362 782 386 768 438 762 496 764 502 794 496 820 488 850 500 890M600 770V820M540 768L536 800 520 818 498 818M520 820L552 836 580 858M60 655L82 654 96 670 98 692 50 690M52 684H80M98 692L130 700 134 736 134 764M85 720L98 710 110 720 112 736 104 744M130 712L182 714M183 705L180 762M183 705H212L214 754M222 700L224 752M235 750V710L244 684M200 680L234 690M163 705L183 704M345 712L320 750 294 762M300 787H346L344 820 326 844M346 785L382 780 376 810 358 848 330 852M327 863H365L375 880H415L418 910 437 913V928H418V975M437 913L478 920 490 930 480 926V890L500 884 526 894V930L500 948 476 974 446 976M320 972H418L446 976M525 895L534 930 544 960 530 950M538 918L592 908M500 950L522 964 520 1000 510 1018 486 1016 446 976M407 978V1016L398 1020V1080L370 1076M398 1062L446 1046 464 1046 484 1016M510 1018L516 1054M465 1090L477 1080 485 1086 473 1098zM500 1056L508 1050 516 1054 512 1064zM488 830L500 822V836L488 840"/>
                            <path class="line" d="M1035 345L968 324 942 294 906 298 870 288 838 296 790 300 786 326 720 326 682 320 650 345 652 362 668 368M1035 345L1078 332 1134 338 1142 320 1190 332 1210 340 1250 338 1306 344 1340 336 1348 306 1394 308 1420 340 1446 356 1482 350 1472 384 1446 390V404M1035 345L1062 352 1070 376 1112 404 1200 414 1260 404 1270 388 1308 374 1340 366 1304 352 1310 340M1035 345L1002 362 972 388 968 410 942 404 884 404 862 424 846 428 822 408 798 400 770 382 738 384V416M968 410L940 424 908 436 870 430 882 412M862 424L852 452 884 456M908 434L912 456 940 474 954 500 970 520M722 424L762 408 796 430 840 454 816 472 784 462 730 446M638 445L652 478 664 524M785 458L782 482 788 520 804 552 796 570M785 486L816 470 884 450 880 482 850 516 832 528 790 530M870 550L894 542 916 510 908 484 940 474 914 456 884 460M870 550L880 578 860 582M970 520L966 534 1008 550 1042 558 1044 544 1010 540zM1044 544L1080 546 1110 534 1138 540 1142 552 1136 576 1160 602M1042 558L1048 600 1068 596 1074 570 1050 566M1078 598L1100 560M1160 602L1130 630 1134 660 1144 690 1142 706M1160 602L1164 632 1192 638 1214 678 1180 680 1184 704M1178 592L1196 612 1192 626 1226 664 1226 690 1208 706M1044 544L1044 558M550 510L580 492 602 460 630 452M575 500L632 528 664 534M538 530L564 516 550 510M545 490L580 480M612 656L660 642 704 630 734 600 740 568M705 655L702 632M734 600L696 588M555 463L628 456 632 430 600 406M625 430L652 440 678 438M1392 432L1424 416 1446 404M1404 446L1424 440M1248 800L1278 796 1302 768 1322 768M1541 830V892"/>
                            <path class="line" d="M326 286L320 250 330 210 382 158 404 154 430 160 434 188M504 150L450 150 430 158M485 150L492 180 494 200 508 218 480 242 472 276 504 290 518 318 530 320 588 344 584 360 560 376M410 275L440 270 472 280M436 262L430 250 472 248M436 262L472 266M410 290L444 294 472 280M435 300L434 334 420 350 346 328 345 298M435 320L518 318M270 312V340L294 360 332 352 326 340 350 330M225 332L246 326 268 340M246 320L270 324M294 360L272 372 278 388M275 370L306 364 340 360 362 366 380 346 430 348 478 354 490 376M332 352L384 346M345 375L400 378 422 352 470 356M400 376L420 390 480 396M395 375L392 396 402 414 430 422 470 414M340 380L396 388M362 380L388 404M145 410L140 430 146 460M124 410L146 410M198 402L240 406M345 364L384 366M404 392L414 404 404 414"/>
                        </g>
                        <!-- Australia and New Zealand -->
                        <g class="land" transform="translate(1290 590) scale(.3333)">
                            <path d="M355 68L361 82 366 102 380 106 384 126 390 144 410 158 430 182 448 202 458 220 460 240 450 276 436 292 428 308 422 322 402 328 390 334 376 328 366 332 342 330 330 322 326 310 312 300 300 300 312 280 300 292 296 298 284 282 268 270 240 265 210 270 184 276 178 286 140 290 120 298 98 290 102 276 96 250 82 220 80 208 86 176 112 164 150 154 162 140 170 124 188 108 204 100 218 106 230 108 236 94 252 80 276 76 300 84 290 108 310 122 336 134 344 118zM375 352L391 355 411 353 408 371 392 380 384 374zM640 294L656 306 664 320 678 326 692 324 690 338 678 344 668 360 650 350 662 336zM640 350L652 358 638 378 620 392 606 408 580 403 592 390 616 376zM558 157L568 161 586 177 574 173zM583 108L587 112 592 124M682 134L694 132 696 138 684 140zM697 127L707 122M250 74L270 80"/>
                        </g>
                        <!-- Antarctica -->
                        <g class="land" transform="translate(390 770) scale(.7270 .3333)">
                            <path d="M7 225L14 220 22 225 50 220 62 226 84 230 100 234 112 231 140 235 165 230 128 226 120 216 124 202 108 193 122 197 145 194 150 184 142 177 118 176 104 168 100 155 120 158 148 153 155 142 172 140 195 130 240 132 262 128 280 130 292 126 312 134 340 136 350 137 346 128 338 114 360 124 380 119 396 122 398 114 404 120 430 122 450 124 474 122 492 114 490 86 496 64 510 46 530 28 537 26 532 34 516 44 514 52 504 62 500 70 514 84 520 102 521 124 506 138 476 152 450 153 466 164 448 166 450 180 468 187 486 196 518 200 533 212 550 203 602 200 620 192 660 187 656 178 630 178 632 164 656 160 664 152 700 146 716 134 712 124 740 102 752 104 758 98 780 102 820 90 830 96 850 90 880 90 900 94 920 90 934 74 950 84 970 76 990 66 1002 58 1020 50 1032 58 1044 68 1060 66 1082 70 1085 84 1078 108 1090 108 1104 88 1120 84 1128 72 1142 64 1162 62 1166 56 1172 62 1216 62 1230 47 1244 60 1274 50 1292 60 1310 56 1340 58 1366 54 1369 44 1374 56 1410 60 1420 70 1452 78 1480 96 1520 100 1524 108 1510 124 1496 132 1492 152 1496 164 1506 170 1484 172 1478 192 1500 210 1520 220 1540 222 1562 226V280H7zM76 167L84 164 94 170 96 178 86 178zM460 100L474 94 478 80 484 84 488 104 478 112 462 108zM340 106L350 104 370 110 350 114zM232 120L244 124M254 122L268 124M550 188L560 178 568 164 588 166 596 182 580 190 556 192zM500 185L516 187 526 179 524 191 510 193z"/>
                        </g>
                        <path class="islet" d="M1176 734h5v2h-4z"/>
                        <path class="region" d="M394 297.500h1133v566H394z"/>
                        <path class="cursor" d="M1146 648v17l4-4 3 6 3-1-3-6h6z"/>
                    </svg>
                </div>
                <div class="map-status">
                    <span>17:29:28.20W; 66:18:26.71N</span>
                    <label><input type="checkbox" class="check" checked> Render</label>
                </div>
            </section>

            <section class="pane side right">
                <h2 class="caption">Tools <span><svg><use href="#i-min"/></svg><svg><use href="#i-max"/></svg></span></h2>
                <div class="search-row">
                    <div class="field">
                        <svg class="loupe" viewBox="0 0 18 14"><circle cx="6" cy="5.500" r="4" fill="none" stroke="#777b7c" stroke-width="2"/><path d="M9 8.500l4 4" stroke="#777b7c" stroke-width="2"/></svg>
                        <input type="text" id="tool-search" value="Search" aria-label="Search tools" autofocus>
                        <button aria-label="Clear"><svg><use href="#i-clear"/></svg></button>
                    </div>
                    <button class="btn advanced">Advanced search...</button>
                </div>
                <ul class="tool-tree">
                    <li><i class="tri"></i>Import, export and link data</li>
                    <li><i class="tri"></i>Manage maps</li>
                    <li><i class="tri"></i>Computational region</li>
                    <li><i class="tri"></i>Raster</li>
                    <li><i class="tri"></i>Vector</li>
                    <li><i class="tri"></i>Imagery</li>
                    <li><i class="tri"></i>3D raster</li>
                    <li><i class="tri"></i>Database</li>
                    <li><i class="tri"></i>Temporal</li>
                    <li><i class="tri"></i>GUI tools</li>
                </ul>
                <div class="actions">
                    <button class="btn">Help</button>
                    <button class="btn">Run...</button>
                </div>
                <nav class="bottom-tabs">
                    <a href="#" class="on">Tools</a>
                    <a href="#">Console</a>
                    <a href="#">Python</a>
                </nav>
            </section>
        </main>

        <footer class="statusbar">d.vect map=country_boundaries@PERMANENT</footer>
    </div>
    <script src="main.js"></script>
</body>
</html>
```
FILE: styles.css
```css
* {
    box-sizing: border-box;
}

body {
    margin: 0;
    font-family: "DejaVu Sans", sans-serif;
    font-size: 13px;
    color: #2e3436;
    background: #f6f5f4;
}

button, input, select {
    font: inherit;
    color: inherit;
    margin: 0;
}

a {
    color: inherit;
    text-decoration: none;
}

ul, p, h1, h2 {
    margin: 0;
    padding: 0;
    list-style: none;
}

.sprite {
    display: none;
}

.window {
    display: flex;
    flex-direction: column;
    height: 100vh;
}

/* title and menu */
.titlebar {
    display: flex;
    align-items: center;
    height: 24px;
    background: linear-gradient(#adaba8, #dcd9d6);
}

.logo {
    width: 20px;
    height: 22px;
    margin-left: 1px;
}

.titlebar h1 {
    flex: 1;
    padding-bottom: 3px;
    font-size: 12px;
    line-height: 20px;
    text-align: center;
}

.win-buttons {
    display: flex;
    gap: 7px;
    padding: 0 3px 2px 0;
}

.win-buttons button {
    width: 16px;
    height: 20px;
    padding: 3px;
    border: 0;
    background: none;
}

.win-buttons svg {
    display: block;
    width: 10px;
    height: 10px;
}

.menubar {
    display: flex;
    height: 25px;
    border-bottom: 1px solid #d5d0cc;
    line-height: 25px;
}

.menubar a {
    padding: 0 8px;
}

/* toolbars */
.toolbars {
    display: flex;
    height: 44px;
    background: linear-gradient(to right, #dbdad8 30%, #f6f5f4);
}

.toolbar {
    display: flex;
    align-items: center;
    padding-right: 4px;
    background: #f6f5f4;
    border-right: 1px solid #a3a3a1;
    border-bottom: 1px solid #a3a3a1;
}

.grip {
    align-self: stretch;
    width: 10px;
    margin-right: 3px;
    border: solid #dbdad8;
    border-width: 4px 4px 4px 3px;
    background: repeating-linear-gradient(#8b8b89 0 2px, #dbdad8 2px 5px);
}

.tool {
    display: flex;
    align-items: center;
    justify-content: center;
    width: 37px;
    height: 35px;
    padding: 0;
    border: 0;
    border-radius: 4px;
    background: none;
}

.tool svg {
    width: 24px;
    height: 24px;
}

.tool.active {
    background: #d6d1cd;
}

.sep {
    width: 1px;
    height: 34px;
    margin: 0 6px;
    background: #dbd8d5;
}

/* panes */
.panes {
    display: flex;
    flex: 1;
    gap: 5px;
    min-height: 0;
    background: #dcdbd9;
}

.side {
    width: 386px;
    flex: none;
}

.left {
    display: flex;
    flex-direction: column;
    gap: 5px;
    padding-bottom: 1px;
}

.pane {
    display: flex;
    flex-direction: column;
    border: 1px solid #a5a4a2;
    background: #f6f5f4;
    overflow: hidden;
}

.left .pane {
    flex: 1 1 0;
    min-height: 0;
}

.caption {
    display: flex;
    flex: none;
    justify-content: space-between;
    height: 19px;
    padding: 0 5px 0 3px;
    font-size: 11px;
    font-weight: normal;
    line-height: 17px;
    color: #000;
    background: linear-gradient(#b9b8b6, #d8d7d5);
}

.caption span {
    display: flex;
    gap: 4px;
    padding-top: 3px;
}

.caption svg {
    width: 10px;
    height: 10px;
}

.tools {
    display: flex;
    flex: none;
    align-items: center;
    height: 44px;
    padding: 0 3px;
}

.more {
    margin-left: auto;
}

.down {
    border: 6px solid transparent;
    border-top-color: #2e3436;
    border-bottom: 0;
}

.field {
    display: flex;
    align-items: center;
    height: 34px;
    padding: 0 4px 0 3px;
    border: 1px solid #cdc7c2;
    border-radius: 5px;
    background: #fff;
}

.field.small {
    flex: none;
    height: 19px;
    margin: -2px 5px 5px 5px;
}

.field input {
    flex: 1;
    min-width: 0;
    padding: 0;
    border: 0;
    outline: 0;
    background: none;
}

.field input::placeholder {
    color: #c6c8c8;
    opacity: 1;
}

.field input::selection {
    color: #fff;
    background: #3584e4;
}

.loupe {
    width: 18px;
    height: 14px;
    margin-right: 5px;
}

.field button {
    display: flex;
    padding: 0;
    border: 0;
    background: none;
}

.field button svg {
    width: 14px;
    height: 14px;
}

.infobar {
    position: relative;
    display: flex;
    flex: none;
    align-items: center;
    gap: 6px;
    padding: 0 6px 6px 8px;
    color: #fff;
    background: #3584e4;
}

.bulb {
    width: 14px;
    height: 18px;
    margin-bottom: 34px;
}

.message {
    flex: 1;
    line-height: 17px;
}

.message p + p {
    margin-top: 17px;
}

.info-buttons {
    display: flex;
    align-items: center;
    gap: 12px;
    margin: 6px 0 0 15px;
}

.info-buttons button {
    height: 34px;
    padding: 0 16px;
    border: 1px solid #cdc7c2;
    border-radius: 5px;
    background: none;
}

.info-buttons .dismiss {
    padding: 0 13px;
    border: 0;
}

.dismiss svg {
    width: 9px;
    height: 9px;
}

.tree {
    flex: 1;
    min-height: 0;
    margin-top: -11px;
    overflow: hidden;
    color: #000;
    background: #fff;
}

.tree li {
    display: flex;
    align-items: center;
    height: 23px;
    padding-left: 25px;
}

.tree svg {
    width: 16px;
    height: 16px;
    margin: 0 4px 0 12px;
}

.tree .l2 {
    padding-left: 40px;
}

.tree .l3 {
    padding-left: 65px;
}

.bold {
    font-weight: bold;
}

.tree .current {
    color: #fff;
    background: #3584e4;
}

.tri {
    width: 11px;
    height: 12px;
    background: #4d4f4f;
    clip-path: polygon(20% 0, 80% 50%, 20% 100%);
}

.tri.open {
    clip-path: polygon(0 25%, 100% 25%, 50% 75%);
}

/* layers */
.layer-list {
    flex: 1;
    background: #fff;
}

.layer {
    display: flex;
    align-items: center;
    height: 23px;
    padding-left: 33px;
    border: 1px solid #000;
    color: #fff;
    background: linear-gradient(#59534f, #d5cfca);
}

.layer label {
    display: flex;
    align-items: center;
}

.layer label svg {
    width: 16px;
    height: 14px;
    margin: 0 4px;
}

.layer button {
    width: 23px;
    height: 22px;
    margin-left: 4px;
    padding: 4px 6px;
    border: 0;
    background: #f6f5f4;
}

.layer button svg {
    display: block;
    width: 10px;
    height: 14px;
}

.check {
    appearance: none;
    display: grid;
    place-items: center;
    width: 15px;
    height: 15px;
    border: 1px solid #2b74d0;
    border-radius: 3px;
    background: #3e8be6;
}

.check:checked::after {
    content: "";
    width: 9px;
    height: 5px;
    margin-top: -3px;
    border: solid #fff;
    border-width: 0 0 2px 2px;
    transform: rotate(-45deg);
}

/* map display */
.display {
    display: flex;
    flex: 1;
    flex-direction: column;
    min-width: 0;
    border: solid #a5a4a2;
    border-width: 2px 3px;
    background: #fff;
}

.tabs {
    display: flex;
    height: 29px;
    padding: 3px 2px 0;
    border-bottom: 1px solid #c5c2be;
    background: #f1f0ee;
}

.tab {
    display: flex;
    align-items: center;
    gap: 8px;
    height: 24px;
    padding: 0 5px 0 7px;
    border: 1px solid #cdc7c2;
    border-radius: 4px 4px 0 0;
    background: #fff;
    font-size: 14px;
    font-weight: bold;
}

.tab a {
    border: 1px dotted #222;
    line-height: 18px;
}

.tab button {
    display: flex;
    padding: 0;
    border: 0;
    background: none;
}

.tab svg {
    width: 11px;
    height: 11px;
}

.map-tools {
    display: flex;
    height: 45px;
    border-bottom: 1px solid #a3a3a1;
    background: #dcdbd9;
}

.map-tools .toolbar {
    padding-right: 3px;
    border-bottom: 0;
}

.combo {
    display: grid;
    align-items: center;
    justify-items: end;
}

.combo > * {
    grid-area: 1 / 1;
}

.combo .down {
    margin-right: 12px;
    pointer-events: none;
}

.combo select {
    appearance: none;
    width: 110px;
    height: 34px;
    padding: 0 8px;
    border: 1px solid #cdc7c2;
    border-radius: 5px;
    background: linear-gradient(to right, #fff 73px, #cdc7c2 73px 74px, #f4f3f2 74px);
}

.canvas {
    display: flex;
    flex: 1;
    min-height: 0;
}

.world {
    width: 100%;
    height: 100%;
}

.land path, .islet {
    fill: #0066cc;
    stroke: #0a2238;
    stroke-width: 1px;
    stroke-linejoin: round;
    vector-effect: non-scaling-stroke;
}

.land .sea {
    fill: #fff;
}

.land .line {
    fill: none;
}

.region {
    fill: none;
    stroke: rgba(255, 0, 0, 0.5);
    stroke-width: 3px;
}

.cursor {
    fill: #000;
    stroke: #ccc;
}

.map-status {
    display: flex;
    align-items: center;
    justify-content: space-between;
    height: 31px;
    padding: 0 49px 0 4px;
    border-top: 1px solid #a3a3a1;
    background: #f6f5f4;
}

.map-status label {
    display: flex;
    align-items: center;
    gap: 4px;
}

/* tools panel */
.search-row {
    display: flex;
    gap: 5px;
    padding: 5px;
}

.search-row .field {
    flex: 1;
    min-width: 0;
}

.btn {
    height: 34px;
    min-width: 85px;
    padding: 0 16px;
    border: 1px solid #cdc7c2;
    border-radius: 5px;
    background: linear-gradient(#f6f5f4, #edebe9);
    white-space: nowrap;
}

.tool-tree {
    flex: 1;
    margin: 0 5px;
    padding: 2px 3px;
    background: #fff;
    color: #000;
}

.tool-tree li {
    display: flex;
    align-items: center;
    height: 21px;
    background: linear-gradient(#ddd, #ddd) 0 0 / 1px 100% no-repeat;
}

.tool-tree li::before {
    content: "";
    width: 6px;
    border-top: 1px dotted #bbb;
}

.tool-tree .tri {
    margin: 0 12px 0 1px;
}

.actions {
    display: flex;
    justify-content: flex-end;
    gap: 5px;
    padding: 5px;
}

.bottom-tabs {
    display: flex;
    height: 29px;
    padding-left: 5px;
    border-top: 1px solid #c5c2be;
    background: #f1f0ee;
}

.bottom-tabs a {
    height: 26px;
    padding: 0 15px 0 7px;
    border: 1px solid #cdc7c2;
    border-radius: 0 0 4px 4px;
    line-height: 22px;
}

.bottom-tabs a.on {
    padding: 0 8px 0 7px;
    font-weight: bold;
    background: #fff;
}

.statusbar {
    height: 30px;
    padding-left: 5px;
    line-height: 30px;
}
```
FILE: main.js
```js
// the search text starts selected so typing replaces it
var toolSearch = document.getElementById("tool-search");
toolSearch.focus();
toolSearch.select();
```
